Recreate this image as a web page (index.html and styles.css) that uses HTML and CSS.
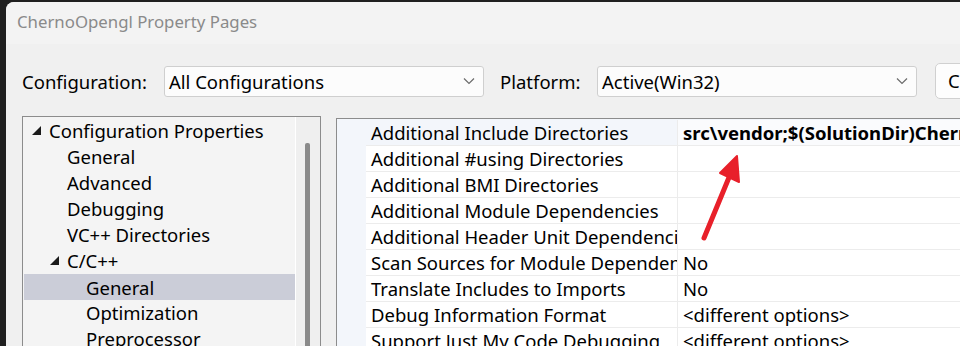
FILE: index.html
```html
<!DOCTYPE html>
<html lang="en">
<head>
    <meta charset="UTF-8">
    <title>ChernoOpengl Property Pages</title>
    <link rel="stylesheet" href="styles.css">
</head>
<body>
    <div class="window">
        <div class="titlebar">ChernoOpengl Property Pages</div>

        <!-- Configuration / Platform -->
        <div class="toolbar">
            <span class="label config-label">Configuration:</span>
            <div class="select config-select">
                <span>All Configurations</span>
                <svg class="chevron" width="12" height="8" viewBox="0 0 12 8"><path d="M1 1.5 L6 6.5 L11 1.5" fill="none" stroke="#6b6b6b" stroke-width="1.2"/></svg>
            </div>
            <span class="label platform-label">Platform:</span>
            <div class="select platform-select">
                <span>Active(Win32)</span>
                <svg class="chevron" width="12" height="8" viewBox="0 0 12 8"><path d="M1 1.5 L6 6.5 L11 1.5" fill="none" stroke="#6b6b6b" stroke-width="1.2"/></svg>
            </div>
            <div class="button">Configuration Manager...</div>
        </div>

        <div class="panels">
            <!-- Tree -->
            <div class="tree">
                <div class="tree-list">
                    <div class="node lvl0"><svg class="tri" width="9" height="9" viewBox="0 0 9 9"><path d="M9 0 L9 9 L0 9 Z" fill="#1a1a1a"/></svg>Configuration Properties</div>
                    <div class="node lvl1">General</div>
                    <div class="node lvl1">Advanced</div>
                    <div class="node lvl1">Debugging</div>
                    <div class="node lvl1">VC++ Directories</div>
                    <div class="node lvl1b"><svg class="tri" width="9" height="9" viewBox="0 0 9 9"><path d="M9 0 L9 9 L0 9 Z" fill="#1a1a1a"/></svg>C/C++</div>
                    <div class="node lvl2 selected">General</div>
                    <div class="node lvl2">Optimization</div>
                    <div class="node lvl2">Preprocessor</div>
                </div>
                <div class="scrollbar"><div class="thumb"></div></div>
            </div>

            <!-- Property grid -->
            <div class="grid">
                <div class="row first">
                    <div class="name">Additional Include Directories</div>
                    <div class="value bold">src\vendor;$(SolutionDir)ChernoOpengl\vendor\GLFW\include;$(SolutionDir)</div>
                </div>
                <div class="row">
                    <div class="name">Additional #using Directories</div>
                    <div class="value"></div>
                </div>
                <div class="row">
                    <div class="name">Additional BMI Directories</div>
                    <div class="value"></div>
                </div>
                <div class="row">
                    <div class="name">Additional Module Dependencies</div>
                    <div class="value"></div>
                </div>
                <div class="row">
                    <div class="name">Additional Header Unit Dependencies</div>
                    <div class="value"></div>
                </div>
                <div class="row">
                    <div class="name">Scan Sources for Module Dependencies</div>
                    <div class="value">No</div>
                </div>
                <div class="row">
                    <div class="name">Translate Includes to Imports</div>
                    <div class="value">No</div>
                </div>
                <div class="row">
                    <div class="name">Debug Information Format</div>
                    <div class="value">&lt;different options&gt;</div>
                </div>
                <div class="row">
                    <div class="name">Support Just My Code Debugging</div>
                    <div class="value">&lt;different options&gt;</div>
                </div>
            </div>
        </div>

        <!-- annotation arrow -->
        <svg class="arrow" width="60" height="100" viewBox="0 0 60 100">
            <path d="M12 85 L38 22" stroke="#e8202a" stroke-width="5" stroke-linecap="round" fill="none"/>
            <path d="M45 3 L47 29 L28 20 Z" fill="#e8202a" stroke="#e8202a" stroke-width="2" stroke-linejoin="round"/>
        </svg>
    </div>
</body>
</html>
```

FILE: styles.css
```css
body {
    margin: 0;
    padding: 2px 0 0 6px;
    height: 346px;
    box-sizing: border-box;
    overflow: hidden;
    background-color: #1f1f1f;
    font-family: 'Noto Sans', sans-serif;
    font-size: 18.5px;
    color: #000;
}

.window {
    position: relative;
    height: 100%;
    background-color: #f0f0f0;
    border-top-left-radius: 8px;
    overflow: hidden;
}

.titlebar {
    height: 42px;
    line-height: 40px;
    padding-left: 11px;
    background-color: #f3f3f3;
    color: #8a8a8a;
    font-size: 16.8px;
}

.toolbar {
    display: flex;
    align-items: center;
    height: 30px;
    margin-top: 22px;
    padding-left: 16px;
    white-space: nowrap;
}

.label {
    flex: none;
}

.config-label {
    width: 142px;
}

.platform-label {
    width: 97px;
}

.select {
    flex: none;
    display: flex;
    align-items: center;
    justify-content: space-between;
    box-sizing: border-box;
    height: 31px;
    padding: 0 8px 0 4px;
    background-color: #fcfcfc;
    border: 1px solid #cfcfcf;
    border-radius: 3px;
}

.config-select {
    width: 320px;
    margin-right: 16px;
}

.platform-select {
    width: 320px;
    margin-right: 18px;
}

.button {
    flex: none;
    box-sizing: border-box;
    height: 36px;
    line-height: 34px;
    padding: 0 12px;
    background-color: #fdfdfd;
    border: 1px solid #d0d0d0;
    border-radius: 5px;
}

.panels {
    display: flex;
    align-items: flex-start;
    margin-top: 20px;
    padding-left: 16px;
}

.tree {
    flex: none;
    display: flex;
    width: 299px;
    height: 240px;
    box-sizing: border-box;
    border: 1px solid #8c8c8c;
    background-color: #f4f4f4;
}

.tree-list {
    width: 271px;
    padding: 0 0 0 1px;
    border-right: 1px solid #ffffff;
}

.node {
    display: flex;
    align-items: center;
    height: 26px;
    white-space: nowrap;
}

.selected {
    margin-top: 1px;
    height: 26px;
}

.selected + .node {
    margin-top: -1px;
}

.tri {
    flex: none;
    margin-right: 8px;
}

.lvl0 {
    padding-left: 8px;
}

.lvl1 {
    padding-left: 43px;
}

.lvl1b {
    padding-left: 26px;
}

.lvl2 {
    padding-left: 62px;
}

.selected {
    background-color: #cbcdd8;
}

.scrollbar {
    flex: 1;
    background-color: #efefef;
    padding: 26px 0 0 9px;
}

.thumb {
    width: 5px;
    height: 300px;
    background-color: #8a8a8a;
    border-radius: 2px 2px 0 0;
}

.grid {
    flex: 1;
    margin-left: 15px;
    margin-top: 2px;
    height: 240px;
    padding: 1px 0 0 29px;
    border: 1px solid #8c8c8c;
    border-right: none;
    background-color: #f3f6fb;
}

.row {
    display: flex;
    height: 26px;
    line-height: 25px;
    background-color: #ffffff;
    border-bottom: 1px solid #ececec;
    box-sizing: border-box;
    white-space: nowrap;
}

.row.first {
    background-color: #f3f6fb;
}

.name {
    flex: none;
    width: 312px;
    box-sizing: border-box;
    padding-left: 5px;
    overflow: hidden;
    text-overflow: clip;
    border-right: 1px solid #ececec;
}

.value {
    flex: 1;
    padding-left: 5px;
    overflow: hidden;
}

.first .value {
    background-color: #fafbfd;
}

.bold {
    font-weight: bold;
}

.arrow {
    position: absolute;
    left: 686px;
    top: 151px;
}
```
